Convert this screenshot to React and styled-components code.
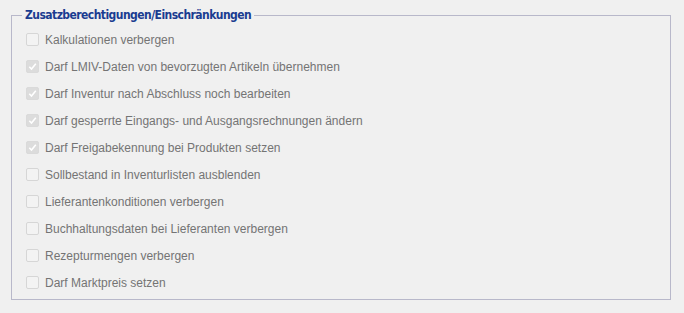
import React from "react";
import styled, { createGlobalStyle } from "styled-components";

const Global = createGlobalStyle`
  html, body { margin: 0; padding: 0; background: #f0f0f0; }
  body { font-family: "Liberation Sans", Arial, sans-serif; }
`;

const Page = styled.div`
  padding: 8px 0 0 11px;
`;

const Group = styled.fieldset`
  box-sizing: border-box;
  width: 660px;
  margin: 0;
  padding: 4px 0 3px 14px;
  border: 1px solid #b8b8ca;
  min-width: 0;
`;

const Legend = styled.legend`
  margin-left: -4px;
  padding: 0 3px;
  font-family: "DejaVu Sans Condensed", "DejaVu Sans", sans-serif;
  font-weight: bold;
  font-size: 12px;
  letter-spacing: -0.55px;
  line-height: 14px;
  color: #1a3c90;
`;

const Row = styled.label`
  display: flex;
  align-items: center;
  height: 27px;
  gap: 6px;
  font-size: 12px;
  color: #747474;
`;

const Box = styled.span`
  box-sizing: border-box;
  width: 13px;
  height: 13px;
  border-radius: 2px;
  border: 1px solid ${(p) => (p.$checked ? "#dadada" : "#d6d6d6")};
  background: ${(p) => (p.$checked ? "#dcdcdc" : "#f3f3f3")};
  display: flex;
  align-items: center;
  justify-content: center;
`;

const items = [
  ["Kalkulationen verbergen", false],
  ["Darf LMIV-Daten von bevorzugten Artikeln übernehmen", true],
  ["Darf Inventur nach Abschluss noch bearbeiten", true],
  ["Darf gesperrte Eingangs- und Ausgangsrechnungen ändern", true],
  ["Darf Freigabekennung bei Produkten setzen", true],
  ["Sollbestand in Inventurlisten ausblenden", false],
  ["Lieferantenkonditionen verbergen", false],
  ["Buchhaltungsdaten bei Lieferanten verbergen", false],
  ["Rezepturmengen verbergen", false],
  ["Darf Marktpreis setzen", false],
];

export default function App() {
  return (
    <Page>
      <Global />
      <Group>
        <Legend>Zusatzberechtigungen/Einschränkungen</Legend>
        {items.map(([t, c]) => (
          <Row key={t}>
            <Box $checked={c}>
              {c && (
                <svg width="9" height="9" viewBox="0 0 9 9">
                  <path d="M1.3 4.8 L3.5 7 L7.8 1.8" fill="none" stroke="#fff" strokeWidth="1.6" />
                </svg>
              )}
            </Box>
            {t}
          </Row>
        ))}
      </Group>
    </Page>
  );
}
